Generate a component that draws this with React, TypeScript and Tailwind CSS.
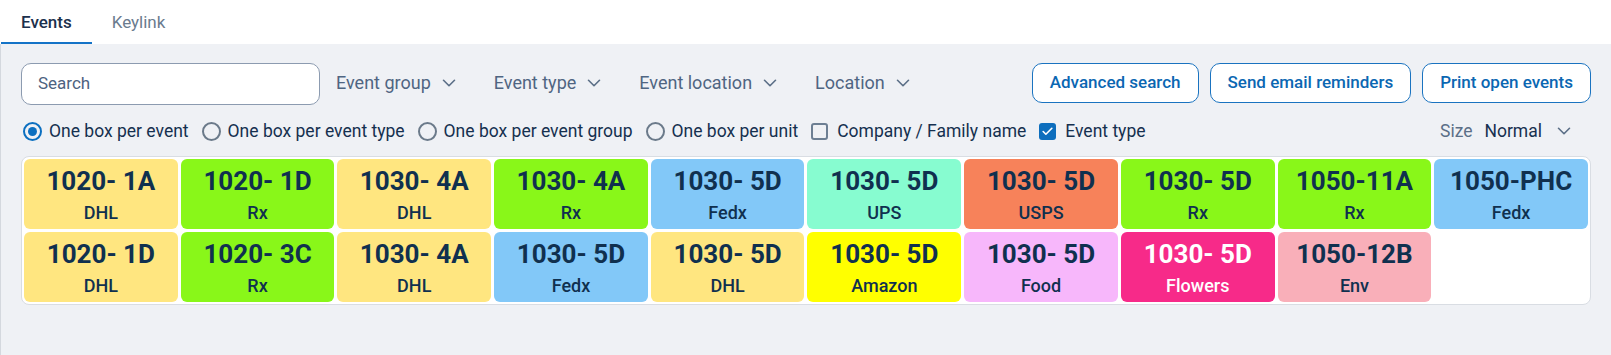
import { ChevronDown, Check } from "lucide-react";

type Box = {
  unit: string;
  label: string;
  color: string;
  light?: boolean;
};

const boxes: Box[] = [
  { unit: "1020- 1A", label: "DHL", color: "bg-[#ffe680]" },
  { unit: "1020- 1D", label: "Rx", color: "bg-[#89f719]" },
  { unit: "1030- 4A", label: "DHL", color: "bg-[#ffe680]" },
  { unit: "1030- 4A", label: "Rx", color: "bg-[#89f719]" },
  { unit: "1030- 5D", label: "Fedx", color: "bg-[#82c8f8]" },
  { unit: "1030- 5D", label: "UPS", color: "bg-[#87fcd0]" },
  { unit: "1030- 5D", label: "USPS", color: "bg-[#f7825a]" },
  { unit: "1030- 5D", label: "Rx", color: "bg-[#89f719]" },
  { unit: "1050-11A", label: "Rx", color: "bg-[#89f719]" },
  { unit: "1050-PHC", label: "Fedx", color: "bg-[#82c8f8]" },
  { unit: "1020- 1D", label: "DHL", color: "bg-[#ffe680]" },
  { unit: "1020- 3C", label: "Rx", color: "bg-[#89f719]" },
  { unit: "1030- 4A", label: "DHL", color: "bg-[#ffe680]" },
  { unit: "1030- 5D", label: "Fedx", color: "bg-[#82c8f8]" },
  { unit: "1030- 5D", label: "DHL", color: "bg-[#ffe680]" },
  { unit: "1030- 5D", label: "Amazon", color: "bg-[#ffff00]" },
  { unit: "1030- 5D", label: "Food", color: "bg-[#f7b7fb]" },
  { unit: "1030- 5D", label: "Flowers", color: "bg-[#f72a89]", light: true },
  { unit: "1050-12B", label: "Env", color: "bg-[#f9afb9]" },
];

const filters = ["Event group", "Event type", "Event location", "Location"];
const actions = ["Advanced search", "Send email reminders", "Print open events"];
const modes = [
  "One box per event",
  "One box per event type",
  "One box per event group",
  "One box per unit",
];

function Radio({ checked, label }: { checked?: boolean; label: string }) {
  return (
    <label className="flex items-center gap-[7px]">
      <span
        className={`w-[19px] h-[19px] rounded-full border-2 flex items-center justify-center ${
          checked ? "border-[#0b6fc0]" : "border-[#6b7a8a]"
        }`}
      >
        {checked && <span className="w-[9px] h-[9px] rounded-full bg-[#0b6fc0]" />}
      </span>
      <span>{label}</span>
    </label>
  );
}

function Checkbox({ checked, label }: { checked?: boolean; label: string }) {
  return (
    <label className="flex items-center gap-[9px]">
      {checked ? (
        <span className="w-[17px] h-[17px] rounded-[3px] bg-[#0d6ebd] flex items-center justify-center">
          <Check size={13} strokeWidth={3} className="text-white" />
        </span>
      ) : (
        <span className="w-[17px] h-[17px] rounded-[3px] border-2 border-[#6d7f93]" />
      )}
      <span>{label}</span>
    </label>
  );
}

export default function App() {
  return (
    <div
      className="h-screen flex flex-col bg-[#eff1f5]"
      style={{ fontFamily: "Roboto, 'Noto Sans', sans-serif" }}
    >
      {/* Tabs */}
      <div className="h-[44px] bg-white flex items-end pl-px">
        <div className="px-5 h-full flex flex-col justify-end">
          <span className="text-[17px] font-medium text-[#1b304d] leading-none pb-[11px]">
            Events
          </span>
          <div className="h-[2px] bg-[#1473c7] -mx-5" />
        </div>
        <div className="px-5 h-full flex flex-col justify-end">
          <span className="text-[17px] text-[#6a7b8e] leading-none pb-[13px]">Keylink</span>
        </div>
      </div>

      <div className="flex-1 border-l border-[#d4d8de] px-5 pt-[19px] text-[17.5px] text-[#15304f]">
        {/* Search and filters */}
        <div className="flex items-center h-[42px]">
          <div className="w-[299px] h-[42px] rounded-[10px] border border-[#8c9bb0] bg-white flex items-center px-4 text-[17px] text-[#4d6280]">
            Search
          </div>
          <div className="flex items-center gap-[34px] ml-4 pb-[3px] text-[18px] text-[#4f6582]">
            {filters.map((f) => (
              <div key={f} className="flex items-center gap-[7px]">
                <span>{f}</span>
                <ChevronDown size={22} strokeWidth={1.75} className="text-[#5b6f87]" />
              </div>
            ))}
          </div>
          <div className="ml-auto flex items-center gap-[11px] -mt-[2px] text-[17px]">
            {actions.map((a) => (
              <button
                key={a}
                className="h-[40px] px-[17px] rounded-[10px] border border-[#1a73c0] bg-white text-[#0b67b2] font-medium"
              >
                {a}
              </button>
            ))}
          </div>
        </div>

        {/* Display options */}
        <div className="flex items-center h-[24px] mt-[14px] pl-[2px]">
          <div className="flex items-center gap-[13px]">
            {modes.map((m, i) => (
              <Radio key={m} label={m} checked={i === 0} />
            ))}
            <Checkbox label="Company / Family name" />
            <Checkbox label="Event type" checked />
          </div>
          <div className="ml-auto flex items-center pr-[16px]">
            <span className="text-[#5b6f87]">Size</span>
            <span className="ml-3 text-[#17304f]">Normal</span>
            <ChevronDown size={22} strokeWidth={1.75} className="ml-[11px] text-[#5b6f87]" />
          </div>
        </div>

        {/* Event boxes */}
        <div className="mt-[13px] bg-white border border-[#d9dde3] rounded-[8px] p-[2px] grid grid-cols-10 gap-[3px]">
          {boxes.map((b, i) => (
            <div
              key={i}
              className={`${b.color} h-[70px] rounded-[6px] flex flex-col items-center pt-[6px] ${
                b.light ? "text-white" : "text-[#10304f]"
              }`}
            >
              <span className="text-[26px] font-bold leading-[32px]">{b.unit}</span>
              <span className="text-[18px] font-medium leading-[20px] mt-[6px]">{b.label}</span>
            </div>
          ))}
        </div>
      </div>
    </div>
  );
}
